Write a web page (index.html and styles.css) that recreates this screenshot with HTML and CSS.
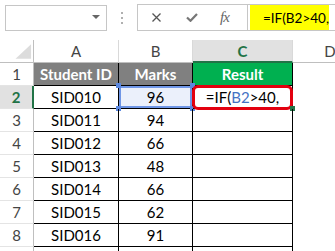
FILE: index.html
```html
<!DOCTYPE html>
<html>
<head>
<meta charset="utf-8">
<link rel="stylesheet" href="styles.css">
</head>
<body>
<div class="toolbar">
  <div class="namebox"><span class="dd"></span></div>
  <div class="grip"><i></i><i></i><i></i></div>
  <div class="fbar">
    <span class="ic icx"><svg width="9" height="9" viewBox="0 0 9 9"><path d="M0.5 0.5 L8.5 8.5 M8.5 0.5 L0.5 8.5" stroke="#555" stroke-width="1.3" fill="none"/></svg></span>
    <span class="ic icok"><svg width="12" height="9" viewBox="0 0 12 9"><path d="M1 4.5 L4.5 7.8 L11 1" stroke="#777" stroke-width="2.2" fill="none"/></svg></span>
    <span class="fx">fx</span>
    <div class="finput"><div class="hl">=IF(B2&gt;40,</div></div>
  </div>
</div>
<div class="sheet">
  <div class="corner"><svg width="34" height="23" viewBox="0 0 34 23"><polygon points="32,4 32,19 16,19" fill="#dcdcdc"/></svg></div>
  <div class="ch">A</div>
  <div class="ch">B</div>
  <div class="ch ch-sel">C</div>
  <div class="ch ch-last">D</div>

  <div class="rh">1</div>
  <div class="c th grey">Student ID</div>
  <div class="c th grey">Marks</div>
  <div class="c th green">Result</div>
  <div class="e"></div>

  <div class="rh rh-sel">2</div>
  <div class="c">SID010</div>
  <div class="c ref">96<i class="h tl"></i><i class="h tr"></i><i class="h bl"></i><i class="h br"></i></div>
  <div class="c edit"><span class="f">=IF(<span class="blue">B2</span>&gt;40,</span><i class="ring"></i><i class="fill"></i></div>
  <div class="e"></div>

  <div class="rh">3</div><div class="c">SID011</div><div class="c">94</div><div class="c"></div><div class="e"></div>
  <div class="rh">4</div><div class="c">SID012</div><div class="c">66</div><div class="c"></div><div class="e"></div>
  <div class="rh">5</div><div class="c">SID013</div><div class="c">48</div><div class="c"></div><div class="e"></div>
  <div class="rh">6</div><div class="c">SID014</div><div class="c">66</div><div class="c"></div><div class="e"></div>
  <div class="rh">7</div><div class="c">SID015</div><div class="c">62</div><div class="c"></div><div class="e"></div>
  <div class="rh">8</div><div class="c">SID016</div><div class="c">91</div><div class="c"></div><div class="e"></div>
  <div class="rh"></div><div class="c"></div><div class="c"></div><div class="c"></div><div class="e"></div>
</div>
</body>
</html>
```

FILE: styles.css
```css
html, body {
  margin: 0;
  padding: 0;
  background: #fff;
  overflow: hidden;
}
body {
  width: 335px;
  height: 251px;
  font-family: Lato, "Open Sans", sans-serif;
  font-size: 15px;
  color: #000;
}
.toolbar {
  height: 40px;
  box-sizing: border-box;
  padding-top: 4px;
  display: flex;
  align-items: flex-start;
}
.namebox {
  margin-left: 5px;
  margin-top: 1px;
  width: 102px;
  height: 26px;
  box-sizing: border-box;
  border: 1px solid #c6c6c6;
  display: flex;
  justify-content: flex-end;
  align-items: center;
  padding-right: 6px;
}
.dd {
  width: 0;
  height: 0;
  border-left: 4px solid transparent;
  border-right: 4px solid transparent;
  border-top: 4px solid #666;
  margin-bottom: 3px;
}
.grip {
  margin-left: 14px;
  margin-top: 8px;
  display: flex;
  flex-direction: column;
  gap: 3px;
}
.grip i {
  display: block;
  width: 2px;
  height: 2px;
  background: #b0b0b0;
}
.fbar {
  margin-left: 14px;
  flex: 1;
  height: 27px;
  box-sizing: border-box;
  border: 1px solid #c6c6c6;
  border-right: none;
  display: flex;
  align-items: center;
}
.ic {
  display: flex;
}
.icx {
  margin-left: 14px;
}
.icok {
  margin-left: 25px;
}
.fx {
  margin-left: 22px;
  font-family: "Liberation Serif", serif;
  font-style: italic;
  font-size: 15px;
  color: #666;
  width: 14px;
  letter-spacing: -1px;
}
.finput {
  margin-left: 13px;
  height: 100%;
  box-sizing: border-box;
  border-left: 1px solid #c6c6c6;
  padding: 0 0 0 2px;
  display: flex;
}
.hl {
  background: #ffff00;
  width: 79px;
  box-sizing: border-box;
  padding-left: 13px;
  font-size: 13.5px;
  display: flex;
  align-items: center;
  white-space: nowrap;
}
.sheet {
  display: grid;
  grid-template-columns: 34px 85px 74px 100px 74px;
  grid-auto-rows: 23px;
}
.sheet > div {
  box-sizing: border-box;
  display: flex;
  align-items: center;
  justify-content: center;
  white-space: nowrap;
}
.corner {
  border-right: 1px solid #bfbfbf;
  border-bottom: 1px solid #bfbfbf;
}
.ch {
  color: #444;
  border-right: 1px solid #d9d9d9;
  border-bottom: 1px solid #bfbfbf;
}
.ch-sel {
  background: #e1e1e1;
  color: #217346;
  font-weight: bold;
  border-bottom: 2px solid #217346;
}
.ch-last {
  border-right: none;
}
.rh {
  color: #444;
  border-right: 1px solid #bfbfbf;
  border-bottom: 1px solid #e4e4e4;
}
.rh-sel {
  background: #e1e1e1;
  color: #217346;
  font-weight: bold;
  border-right: 2px solid #217346;
}
.c {
  border-right: 1px solid #000;
  border-bottom: 1px solid #000;
  position: relative;
}
.th {
  color: #fff;
  font-weight: bold;
}
.grey {
  background: #808080;
}
.green {
  background: #00b050;
}
.ref {
  background: #ebf0fb;
  box-shadow: inset 0 0 0 2px #6f96e6;
}
.h {
  position: absolute;
  width: 5px;
  height: 5px;
  background: #5b88e0;
}
.tl { left: -3px; top: -3px; }
.tr { right: -3px; top: -3px; }
.bl { left: -3px; bottom: -3px; }
.br { right: -3px; bottom: -3px; }
.edit .f {
  position: relative;
  z-index: 1;
}
.blue {
  color: #4472c4;
}
.ring {
  position: absolute;
  left: -1px;
  top: -1px;
  right: -1px;
  bottom: -2px;
  border: 3px solid #e3000f;
  border-radius: 6px;
}
.fill {
  position: absolute;
  right: -3px;
  bottom: -3px;
  width: 5px;
  height: 5px;
  background: #217346;
}
```
